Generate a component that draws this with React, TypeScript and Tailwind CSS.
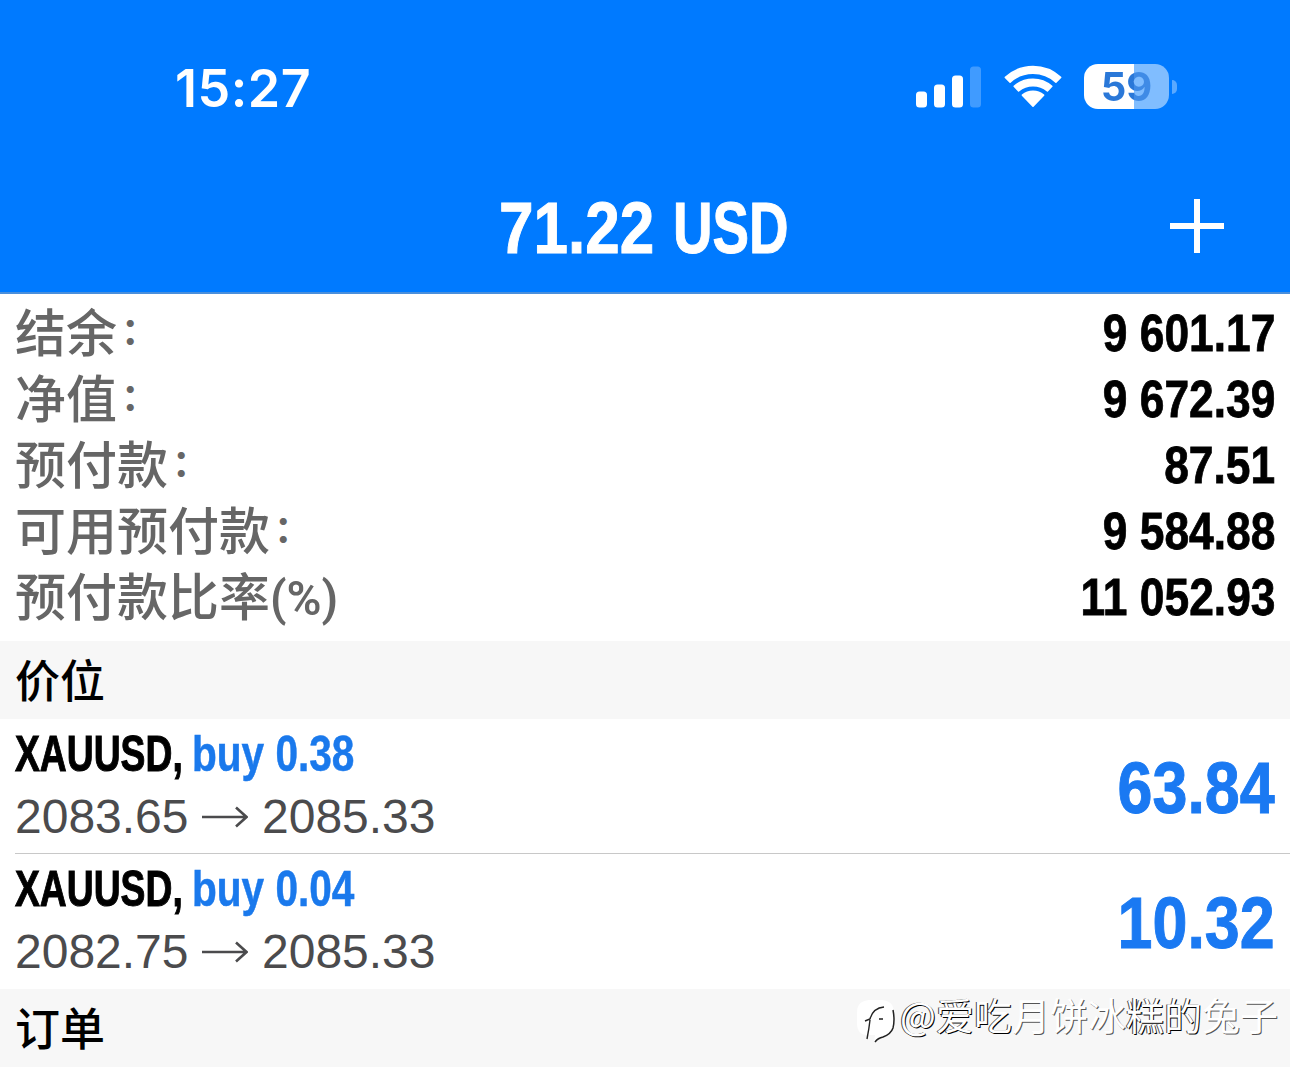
type Position = {
  symbol: string;
  side: string;
  open: string;
  current: string;
  profit: string;
};

const summary = [
  { label: '结余', colon: true, value: '9 601.17' },
  { label: '净值', colon: true, value: '9 672.39' },
  { label: '预付款', colon: true, value: '87.51' },
  { label: '可用预付款', colon: true, value: '9 584.88' },
  { label: '预付款比率', colon: false, value: '11 052.93' },
];

const positions: Position[] = [
  { symbol: 'XAUUSD,', side: 'buy 0.38', open: '2083.65', current: '2085.33', profit: '63.84' },
  { symbol: 'XAUUSD,', side: 'buy 0.04', open: '2082.75', current: '2085.33', profit: '10.32' },
];

function Signal() {
  return (
    <svg width="66" height="44" viewBox="0 0 66 44" fill="#fff">
      <rect x="0" y="26.5" width="11" height="16" rx="3.5" />
      <rect x="18" y="19.5" width="11" height="23" rx="3.5" />
      <rect x="36" y="10.5" width="11" height="32" rx="3.5" />
      <rect x="54" y="1.5" width="11" height="41" rx="3.5" opacity="0.25" />
    </svg>
  );
}

function Wifi() {
  return (
    <svg width="58" height="44" viewBox="0 0 58 44" fill="#fff" stroke="#fff" strokeWidth="1.6" strokeLinejoin="round">
      <path d="M1.4 12.4A40.5 40.5 0 0 1 56.6 12.4L51.9 17.1A34 34 0 0 0 6.1 17.1Z" />
      <path d="M10.2 21.3A28.4 28.4 0 0 1 47.8 21.3L43.4 25.9A22.5 22.5 0 0 0 14.6 25.9Z" />
      <path d="M18.4 30.2A16.4 16.4 0 0 1 39.6 30.2L29 41.2Z" />
    </svg>
  );
}

function Battery() {
  return (
    <div className="flex items-center gap-[3px]">
      <div className="h-[45px] w-[85px] overflow-hidden rounded-[14px] bg-[linear-gradient(to_right,#fff_50px,#80bdff_50px)]">
        <span className="block bg-[linear-gradient(to_right,#2a78d8_50px,#3f8be6_50px)] bg-clip-text text-center font-['Inter',sans-serif] text-[40px] leading-[45px] font-bold text-transparent">
          59
        </span>
      </div>
      <div className="h-[14px] w-[5px] rounded-r-full bg-[#5aa9ff]" />
    </div>
  );
}

function Arrow() {
  return (
    <svg width="46" height="24" viewBox="0 0 46 24" fill="none" stroke="#4b4b4d" strokeWidth="2.6">
      <path d="M0 12H44M34 2.5L44.5 12L34 21.5" />
    </svg>
  );
}

function SectionTitle({ children }: { children: string }) {
  return (
    <div className="h-[78px] bg-[#f7f7f7] pl-[15px]">
      <h2 className="text-[45px] leading-[84px] font-medium text-black">{children}</h2>
    </div>
  );
}

function PositionRow({ p }: { p: Position }) {
  return (
    <div className="flex h-[134px] justify-between px-[15px]">
      <div>
        <div className="flex h-[70px] text-[49.5px] leading-[69px] font-bold whitespace-nowrap">
          <span className="w-[177px] origin-left scale-x-[0.753] text-black [-webkit-text-stroke:1px_#000]">{p.symbol}</span>
          <span className="origin-left scale-x-[0.82] text-[#1a79ec] [-webkit-text-stroke:0.5px_#1a79ec]">{p.side}</span>
        </div>
        <div className="flex h-[56px] items-center text-[48px] leading-[56px] text-[#4b4b4d]">
          <span className="w-[187px]">{p.open}</span>
          <Arrow />
          <span className="ml-[14px]">{p.current}</span>
        </div>
      </div>
      <span className="origin-right scale-x-[0.86] text-[73px] leading-[138px] font-bold text-[#1a79f2] [-webkit-text-stroke:1px_#1a79f2]">
        {p.profit}
      </span>
    </div>
  );
}

export default function App() {
  return (
    <div className="relative h-[1080px] w-[1290px] overflow-hidden bg-white font-['Liberation_Sans','Noto_Sans_CJK_SC',sans-serif]">
      <header className="h-[294px] border-b-2 border-[#4a8fdc] bg-[#007aff] text-white">
        <div className="flex h-[170px] justify-between pr-[113px] pl-[175px]">
          <span className="mt-[63px] font-['Inter',sans-serif] text-[52px] leading-[52px] font-semibold tracking-[0.5px]">15:27</span>
          <div className="mt-[64px] flex h-[45px] items-center">
            <Signal />
            <div className="ml-[22px]">
              <Wifi />
            </div>
            <div className="ml-[22px]">
              <Battery />
            </div>
          </div>
        </div>
        <div className="flex h-[112px] items-center justify-between pr-[66px] pl-[499px]">
          <h1 className="mt-[4px] flex text-[73px] leading-[108px] font-bold whitespace-nowrap [-webkit-text-stroke:1px_#fff]">
            <span className="w-[174px] origin-left scale-x-[0.85]">71.22</span>
            <span className="origin-left scale-x-[0.75]">USD</span>
          </h1>
          <svg width="54" height="54" viewBox="0 0 54 54" stroke="#fff" strokeWidth="6">
            <path d="M27 0V54M0 27H54" />
          </svg>
        </div>
      </header>

      <section className="h-[347px] pt-[5px]">
        {summary.map((row) => (
          <div key={row.label} className="flex h-[66px] justify-between px-[15px] whitespace-nowrap">
            <span className="flex text-[51px] leading-[72px] font-medium text-[#666]">
              <span>{row.label}</span>
              {row.colon ? (
                <span className="ml-[4px] text-[37px] leading-[68px] font-bold">：</span>
              ) : (
                <span className="origin-left scale-x-[0.97] font-['Roboto',sans-serif] text-[49px] leading-[71px] font-semibold">(%)</span>
              )}
            </span>
            <span className="origin-right scale-x-[0.853] text-[52px] leading-[69px] font-bold text-black [-webkit-text-stroke:0.8px_#000]">
              {row.value}
            </span>
          </div>
        ))}
      </section>

      <SectionTitle>价位</SectionTitle>
      <PositionRow p={positions[0]} />
      <div className="ml-[15px] h-px bg-[#c8c8c8]" />
      <div className="h-[135px]">
        <PositionRow p={positions[1]} />
      </div>
      <SectionTitle>订单</SectionTitle>

      {/* account watermark over the bottom right corner */}
      <div className="absolute top-[991px] left-[856px] flex">
        <svg className="mt-[7px]" width="42" height="46" viewBox="0 0 42 46" fill="none">
          <path d="M13 2H26Q38 3 38 15V26Q37 36 27 39L18 44L19 37H10Q1 36 1 26V14Q1 3 13 2Z" fill="#fff" />
          <path d="M37 12Q39 22 37 30Q35 36 27 39Q22 40 19 44" stroke="#222" strokeWidth="1.5" />
          <path d="M9 23L14 21Q17 10 28 9M14 22Q13 31 11 41M23 21H27" stroke="#222" strokeWidth="1.4" />
        </svg>
        <span className="ml-[2px] font-['Noto_Sans_CJK_SC',sans-serif] text-[38px] leading-[46px] whitespace-nowrap text-white">
          <span className="[text-shadow:1px_1px_0_#000,-1px_0_0_#444]">@爱吃</span>
          <span className="[text-shadow:1px_1px_0_#555]">月饼冰</span>
          <span className="[text-shadow:1px_1px_0_#000,-1px_0_0_#444]">糕的</span>
          <span className="[text-shadow:1px_1px_0_#555]">兔子</span>
        </span>
      </div>
    </div>
  );
}
